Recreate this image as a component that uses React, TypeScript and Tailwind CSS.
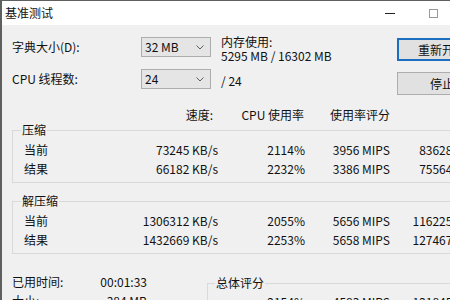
import React from 'react'

type Row = { name: string; speed: string; usage: string; rating: string; total: string }

const compress: Row[] = [
  { name: '当前', speed: '73245 KB/s', usage: '2114%', rating: '3956 MIPS', total: '83628 MIPS' },
  { name: '结果', speed: '66182 KB/s', usage: '2232%', rating: '3386 MIPS', total: '75564 MIPS' },
]

const decompress: Row[] = [
  { name: '当前', speed: '1306312 KB/s', usage: '2055%', rating: '5656 MIPS', total: '116225 MIPS' },
  { name: '结果', speed: '1432669 KB/s', usage: '2253%', rating: '5658 MIPS', total: '127467 MIPS' },
]

// 下拉框
function Combo({ value }: { value: string }) {
  return (
    <div className="flex h-[20px] w-[70px] items-center justify-between border border-[#adadad] bg-[#e5e5e5] pl-[3px] pr-[6px]">
      <span>{value}</span>
      <svg width="8" height="5" viewBox="0 0 8 5">
        <path d="M0.5 0.5 L4 4 L7.5 0.5" fill="none" stroke="#606060" strokeWidth="1" />
      </svg>
    </div>
  )
}

// 分组框
function Group({ title, rows }: { title: string; rows: Row[] }) {
  return (
    <fieldset className="border border-[#d9d9d9] pt-[2px] pb-[4px]">
      <legend className="ml-[8px] px-[1px] leading-[16px]">{title}</legend>
      {rows.map((r) => (
        <div key={r.name} className="grid h-[19px] grid-cols-[205px_87px_85px_93px] items-center whitespace-nowrap">
          <div className="flex justify-between">
            <span className="pl-[11px]">{r.name}</span>
            <span>{r.speed}</span>
          </div>
          <span className="text-right">{r.usage}</span>
          <span className="text-right">{r.rating}</span>
          <span className="text-right">{r.total}</span>
        </div>
      ))}
    </fieldset>
  )
}

export default function App() {
  return (
    <div className="h-[300px] w-[450px] overflow-hidden bg-[#f0f0f0] font-['Noto_Sans_CJK_SC',sans-serif] text-[12px] leading-[16px] text-[#111]">
      <div className="w-[505px] border-l-2 border-t border-[#5f5f5f]">
        {/* 标题栏 */}
        <div className="flex h-[24px] items-center justify-between bg-white">
          <span className="pl-[3px] text-[12px]">基准测试</span>
          <div className="flex h-full">
            <div className="flex w-[46px] items-center justify-center">
              <div className="h-[1px] w-[10px] bg-[#222]" />
            </div>
            <div className="flex w-[46px] items-center justify-center pr-[5px]">
              <div className="h-[9px] w-[9px] border border-[#999]" />
            </div>
            <div className="w-[46px]" />
          </div>
        </div>

        <div className="pl-[10px]">
          {/* 顶部设置 */}
          <div className="flex items-start">
            <div className="flex w-[129px] flex-col gap-[12px] pt-[12px]">
              <div className="flex h-[20px] items-center">字典大小(D):</div>
              <div className="flex h-[20px] items-center">CPU 线程数:</div>
            </div>
            <div className="flex flex-col gap-[12px] pt-[12px]">
              <Combo value="32 MB" />
              <Combo value="24" />
            </div>
            <div className="ml-[10px] w-[176px] pt-[10px] leading-[14px]">
              <div>内存使用:</div>
              <div>5295 MB / 16302 MB</div>
              <div className="mt-[10px] leading-[16px]">/ 24</div>
            </div>
            <div className="flex flex-col gap-[11px] pt-[13px]">
              <button className="h-[23px] w-[90px] border-2 border-[#1c6fc0] bg-[#e1e1e1]">重新开始</button>
              <button className="h-[23px] w-[90px] border border-[#adadad] bg-[#e1e1e1]">停止</button>
            </div>
          </div>

          {/* 表头 */}
          <div className="mt-[12px] grid h-[16px] grid-cols-[206px_87px_85px_93px] items-center whitespace-nowrap">
            <span className="pr-[5px] text-right">速度:</span>
            <span className="pr-[1px] text-right">CPU 使用率</span>
            <span className="text-right">使用率评分</span>
            <span className="text-right">评分</span>
          </div>

          <div className="-mt-[1px]">
            <Group title="压缩" rows={compress} />
          </div>
          <div className="mt-[10px]">
            <Group title="解压缩" rows={decompress} />
          </div>

          {/* 底部 */}
          <div className="flex items-start">
            <div className="mt-[18px] w-[195px] whitespace-nowrap">
              <div className="grid h-[19px] grid-cols-[83px_52px] items-center">
                <span>已用时间:</span>
                <span className="text-right">00:01:33</span>
              </div>
              <div className="grid h-[19px] grid-cols-[83px_52px] items-center">
                <span>大小:</span>
                <span className="text-right">384 MB</span>
              </div>
            </div>
            <fieldset className="mt-[21px] flex-1 border border-[#d9d9d9] pt-[1px]">
              <legend className="ml-[7px] px-[1px] leading-[16px]">总体评分</legend>
              <div className="grid h-[19px] grid-cols-[10px_87px_85px_93px] items-center whitespace-nowrap">
                <span />
                <span className="text-right">2154%</span>
                <span className="text-right">4583 MIPS</span>
                <span className="text-right">121845 MIPS</span>
              </div>
            </fieldset>
          </div>
        </div>
      </div>
    </div>
  )
}
